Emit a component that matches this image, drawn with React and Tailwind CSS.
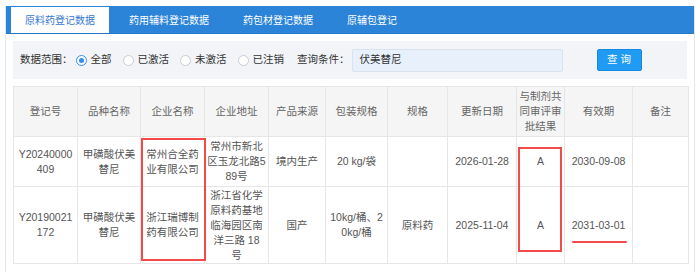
const tabs = ['原料药登记数据', '药用辅料登记数据', '药包材登记数据', '原辅包登记'];
const radios = ['全部', '已激活', '未激活', '已注销'];

const cols = [
  { title: '登记号', w: 64, pad: 'px-[3px]' },
  { title: '品种名称', w: 63, pad: 'px-[3px]' },
  { title: '企业名称', w: 64, pad: 'px-[3px]' },
  { title: '企业地址', w: 64, pad: 'px-[2px]' },
  { title: '产品来源', w: 57, pad: 'px-[3px]' },
  { title: '包装规格', w: 62, pad: 'px-[3px]' },
  { title: '规格', w: 60, pad: 'px-[3px]' },
  { title: '更新日期', w: 69, pad: 'px-[3px]' },
  { title: '与制剂共同审评审批结果', w: 48, pad: 'px-[2px]' },
  { title: '有效期', w: 68, pad: 'px-[3px]' },
  { title: '备注', w: 56, pad: 'px-[3px]' },
];

const rows = [
  {
    h: 'h-[50px]',
    cells: ['Y20240000409', '甲磺酸伏美替尼', '常州合全药业有限公司', '常州市新北区玉龙北路589号', '境内生产', '20 kg/袋', '', '2026-01-28', 'A', '2030-09-08', ''],
  },
  {
    h: 'h-[77px]',
    cells: ['Y20190021172', '甲磺酸伏美替尼', '浙江瑞博制药有限公司', '浙江省化学原料药基地临海园区南洋三路 18 号', '国产', '10kg/桶、20kg/桶', '原料药', '2025-11-04', 'A', '2031-03-01', ''],
  },
];

export default function App() {
  return (
    <div className="w-[700px] h-[272px] overflow-hidden bg-white pt-[6px] px-[5px] font-['Liberation_Sans','Noto_Sans_CJK_SC',sans-serif]">
      <div className="h-full border-x border-[#e2e7ee]">
        {/* tab bar */}
        <div className="flex h-[28px] items-end gap-[6px] border-b border-[#2677c6] bg-[#2b84d7] pl-[5px]">
          {tabs.map((t, i) => (
            <div
              key={t}
              className={
                i === 0
                  ? 'flex h-[26px] items-center bg-white px-[14px] text-[10px] text-[#3579cf]'
                  : 'flex h-[26px] items-center px-[14px] text-[10px] text-white'
              }
            >
              {t}
            </div>
          ))}
        </div>

        <div className="px-[7px] pt-[7px]">
          {/* filter */}
          <div className="flex h-[38px] items-center bg-[#f2f4f8] pl-[7px] text-[10.5px] text-[#333]">
            <span>数据范围：</span>
            <div className="ml-[3px] flex items-center gap-[11px]">
              {radios.map((r, i) => (
                <label key={r} className="flex items-center gap-[4px]">
                  {i === 0 ? (
                    <span className="flex h-[11px] w-[11px] items-center justify-center rounded-full border border-[#2f8ff0] bg-white">
                      <span className="h-[5px] w-[5px] rounded-full bg-[#2f8ff0]" />
                    </span>
                  ) : (
                    <span className="h-[11px] w-[11px] rounded-full border border-[#c9ccd2] bg-white" />
                  )}
                  <span>{r}</span>
                </label>
              ))}
            </div>
            <span className="ml-[13px]">查询条件：</span>
            <div className="ml-[2px] flex h-[23px] w-[211px] items-center rounded-[2px] border border-[#d9e2ee] bg-[#e8f0fc] pl-[7px] text-[#333]">
              伏美替尼
            </div>
            <button className="ml-[34px] h-[22px] w-[45px] rounded-[2px] border border-[#1789e0] bg-[#1f9bf3] text-[10.5px] text-white">
              查 询
            </button>
          </div>

          {/* table */}
          <div className="relative mt-[7px]">
            <table className="w-[675px] table-fixed border-collapse text-center text-[10.5px] leading-[15px]">
              <colgroup>
                {cols.map((c) => (
                  <col key={c.title} style={{ width: c.w }} />
                ))}
              </colgroup>
              <thead>
                <tr className="h-[50px] bg-[#f5f5f5] text-[#666]">
                  {cols.map((c) => (
                    <th key={c.title} className="border border-[#e6e6e6] px-[2px] py-0 font-normal break-all">
                      {c.title}
                    </th>
                  ))}
                </tr>
              </thead>
              <tbody>
                {rows.map((r, ri) => (
                  <tr key={ri} className={`${r.h} text-[#555]`}>
                    {r.cells.map((c, ci) => (
                      <td key={ci} className={`border border-[#e6e6e6] py-0 break-all ${cols[ci].pad}`}>
                        {c}
                      </td>
                    ))}
                  </tr>
                ))}
              </tbody>
            </table>

            {/* red annotations */}
            <div className="absolute left-[128px] top-[52px] h-[123px] w-[65px] border-2 border-[#f34a4a]" />
            <div className="absolute left-[505px] top-[61px] h-[105px] w-[44px] border-2 border-[#f34a4a]" />
            <div className="absolute left-[559px] top-[155px] h-[2px] w-[55px] rounded-full bg-[#f34a4a]" />
          </div>
        </div>
      </div>
    </div>
  );
}
